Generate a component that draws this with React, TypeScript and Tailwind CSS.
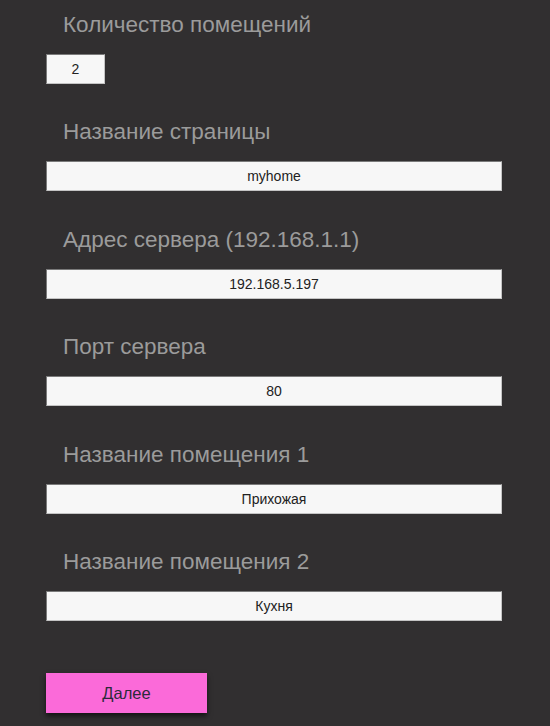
const fields = [
  { label: 'Название страницы', value: 'myhome' },
  { label: 'Адрес сервера (192.168.1.1)', value: '192.168.5.197' },
  { label: 'Порт сервера', value: '80' },
  { label: 'Название помещения 1', value: 'Прихожая' },
  { label: 'Название помещения 2', value: 'Кухня' },
];

function Field({ label, value, narrow }: { label: string; value: string; narrow?: boolean }) {
  return (
    <div className="flex flex-col">
      <div className="h-[26px] pl-[17px] text-[22.5px] leading-[26px] text-[#9b9b9b]">{label}</div>
      <input
        readOnly
        value={value}
        className={`mt-4 h-[30px] border border-t-[#7a7a7a] border-l-[#7a7a7a] border-r-[#c4c4c4] border-b-[#c4c4c4] bg-[#f7f7f7] text-center text-[14px] text-[#222] outline-none ${narrow ? 'w-[59px]' : 'w-[456px]'}`}
        style={{ fontFamily: '"Liberation Sans", Arial, sans-serif' }}
      />
    </div>
  );
}

export default function App() {
  return (
    <div
      className="min-h-[726px] bg-[#312f30] pl-[46px] pt-[12px]"
      style={{ fontFamily: '"Liberation Sans", Arial, sans-serif' }}
    >
      <div className="flex flex-col gap-[35.4px]">
        <Field label="Количество помещений" value="2" narrow />
        {fields.map((f) => (
          <Field key={f.label} label={f.label} value={f.value} />
        ))}
      </div>
      <button className="mt-[52px] h-[40px] w-[161px] bg-[#fb6ad9] text-[16.5px] text-[#2c2a3a] shadow-[0_3px_5px_rgba(0,0,0,0.6)]">
        Далее
      </button>
    </div>
  );
}
